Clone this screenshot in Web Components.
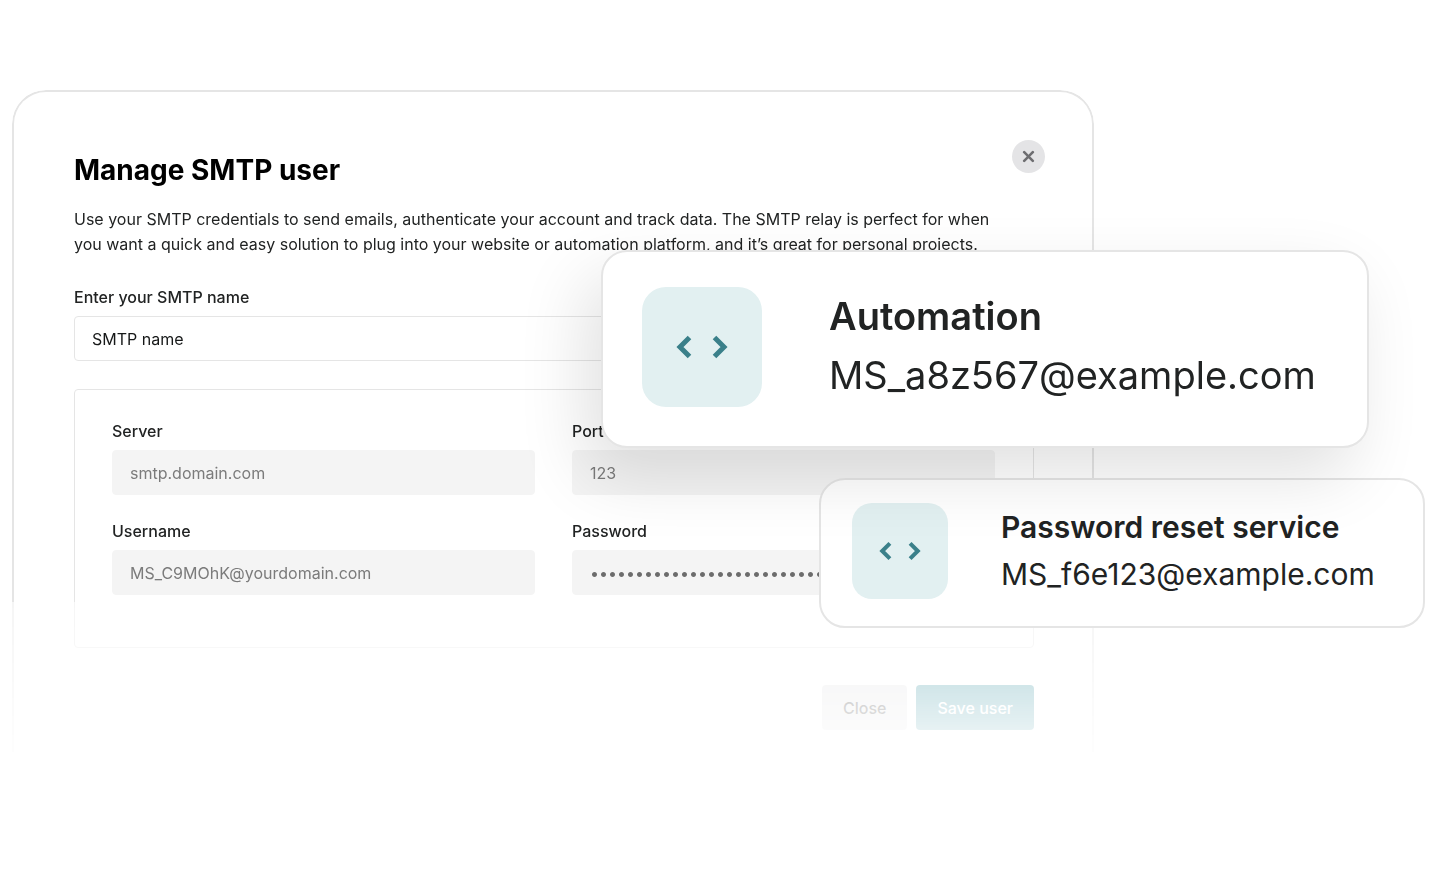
<!DOCTYPE html>
<html lang="en">
<head>
<meta charset="utf-8">
<meta name="viewport" content="width=device-width, initial-scale=1">
<title>Manage SMTP user</title>
<style>
  body {
    margin: 0;
    background: #fff;
    color: #212323;
    font-family: Inter, "Liberation Sans", sans-serif;
    font-size: 16px;
    --line: #e5e5e5;
    --field: #f4f4f4;
    --teal: #198291;
  }
</style>
</head>
<body>
<smtp-stage>
  <smtp-dialog heading="Manage SMTP user">
    <span slot="intro">Use your SMTP credentials to send emails, authenticate your account and track data. The SMTP relay is perfect for when you want a quick and easy solution to plug into your website or automation platform, and it’s great for personal projects.</span>
    <smtp-field label="Enter your SMTP name" value="SMTP name"></smtp-field>
    <smtp-panel>
      <smtp-field label="Server" value="smtp.domain.com" locked></smtp-field>
      <smtp-field label="Port" value="123" locked></smtp-field>
      <smtp-field label="Username" value="MS_C9MOhK@yourdomain.com" locked></smtp-field>
      <smtp-field label="Password" value="3f9c1b7a5d2e8046ab7719cdef250381c6a4" type="password" locked></smtp-field>
    </smtp-panel>
    <smtp-button slot="actions">Close</smtp-button>
    <smtp-button slot="actions" primary>Save user</smtp-button>
  </smtp-dialog>
  <smtp-user slot="back" small>
    <span slot="name">Password reset service</span>
    <span slot="email">MS_f6e123@example.com</span>
  </smtp-user>
  <smtp-user slot="front">
    <span slot="name">Automation</span>
    <span slot="email">MS_a8z567@example.com</span>
  </smtp-user>
</smtp-stage>

<script>
class SmtpStage extends HTMLElement {
  connectedCallback() {
    const shadowRoot = this.attachShadow({ mode: "open" });

    const styles = `
      :host {
        display: block;
        position: relative;
        padding: 90px 346px 0 12px;
      }

      /* user cards float over the dialog */
      .back, .front {
        position: absolute;
      }

      .back {
        top: 478px;
        right: 15px;
      }

      .front {
        top: 250px;
        right: 71px;
      }
    `;

    shadowRoot.innerHTML = `
      <style>${styles}</style>
      <slot></slot>
      <div class="back"><slot name="back"></slot></div>
      <div class="front"><slot name="front"></slot></div>
    `;
  }
}

class SmtpDialog extends HTMLElement {
  connectedCallback() {
    const shadowRoot = this.attachShadow({ mode: "open" });

    const styles = `
      :host {
        display: block;
      }

      section {
        border: 2px solid var(--line);
        border-bottom: 0;
        border-radius: 34px 34px 0 0;
        padding: 48px 58px 22px 60px;
        -webkit-mask-image: linear-gradient(#000 512px, rgba(0, 0, 0, 0.38) 512px, rgba(0, 0, 0, 0.06) 662px);
        mask-image: linear-gradient(#000 512px, rgba(0, 0, 0, 0.38) 512px, rgba(0, 0, 0, 0.06) 662px);
      }

      header {
        display: flex;
        justify-content: space-between;
        align-items: flex-start;
        margin-right: -11px;
      }

      h1 {
        margin: 12px 0 0;
        color: #000;
        font-size: 28px;
        line-height: 36px;
        font-weight: 700;
      }

      header button {
        display: flex;
        align-items: center;
        justify-content: center;
        width: 33px;
        height: 33px;
        padding: 0;
        border: 0;
        border-radius: 50%;
        background: #e4e4e6;
        color: #6d6d70;
      }

      p {
        margin: 19px 0 29px;
        padding-right: 20px;
        line-height: 25px;
      }

      .fields {
        display: flex;
        flex-direction: column;
        gap: 28px;
      }

      footer {
        display: flex;
        justify-content: flex-end;
        gap: 9px;
        margin-top: 37px;
      }
    `;

    shadowRoot.innerHTML = `
      <style>${styles}</style>
      <section role="dialog" aria-labelledby="title">
        <header>
          <h1 id="title">${this.getAttribute("heading")}</h1>
          <button type="button" aria-label="Close dialog">
            <svg width="13" height="13" viewBox="0 0 13 13" fill="none" stroke="currentColor" stroke-width="2.600" stroke-linecap="round"><path d="M2.200 2.200l8.600 8.600M10.800 2.200l-8.600 8.600"/></svg>
          </button>
        </header>
        <p><slot name="intro"></slot></p>
        <div class="fields"><slot></slot></div>
        <footer><slot name="actions"></slot></footer>
      </section>
    `;
  }
}

class SmtpPanel extends HTMLElement {
  connectedCallback() {
    const shadowRoot = this.attachShadow({ mode: "open" });

    const styles = `
      :host {
        display: grid;
        grid-template-columns: 1fr 1fr;
        gap: 25px 37px;
        padding: 30px 38px 52px 37px;
        border: 1px solid var(--line);
        border-radius: 4px;
      }
    `;

    shadowRoot.innerHTML = `
      <style>${styles}</style>
      <slot></slot>
    `;
  }
}

class SmtpField extends HTMLElement {
  connectedCallback() {
    const shadowRoot = this.attachShadow({ mode: "open" });
    const type = this.getAttribute("type") || "text";
    const locked = this.hasAttribute("locked");

    const styles = `
      :host {
        display: block;
      }

      label {
        display: block;
        margin-bottom: 8px;
        line-height: 22px;
        font-weight: 500;
      }

      input {
        display: block;
        box-sizing: border-box;
        width: 100%;
        height: 45px;
        padding: 0 17px;
        border: 1px solid var(--line);
        border-radius: 4px;
        background: #fff;
        color: #161818;
        font: inherit;
      }

      :host([locked]) input {
        border-color: var(--field);
        background: var(--field);
        color: #7b7b7b;
      }

      :host([type="password"]) input {
        color: #6c6c6c;
      }
    `;

    shadowRoot.innerHTML = `
      <style>${styles}</style>
      <label for="input">${this.getAttribute("label")}</label>
      <input id="input" type="${type}" value="${this.getAttribute("value")}" ${locked ? "readonly" : ""}>
    `;
  }
}

class SmtpButton extends HTMLElement {
  connectedCallback() {
    const shadowRoot = this.attachShadow({ mode: "open" });

    const styles = `
      :host {
        display: block;
      }

      button {
        height: 45px;
        padding: 0 21px;
        border: 0;
        border-radius: 4px;
        background: #dcdcde;
        color: #000;
        font: inherit;
        font-weight: 500;
      }

      :host([primary]) button {
        background: var(--teal);
        color: #fff;
      }
    `;

    shadowRoot.innerHTML = `
      <style>${styles}</style>
      <button type="button"><slot></slot></button>
    `;
  }
}

class SmtpUser extends HTMLElement {
  connectedCallback() {
    const shadowRoot = this.attachShadow({ mode: "open" });

    const styles = `
      :host {
        display: flex;
        align-items: center;
        box-sizing: border-box;
        width: 768px;
        height: 198px;
        gap: 67px;
        padding: 0 39px 4px;
        border: 2px solid var(--line);
        border-radius: 26px;
        background: #fff;
        box-shadow: -16px 28px 68px rgba(0, 0, 0, 0.12);
        font-size: 38px;
        line-height: 59px;
        white-space: nowrap;
      }

      .icon {
        display: flex;
        align-items: center;
        justify-content: center;
        width: 120px;
        height: 120px;
        border-radius: 24px;
        background: #e2f0f1;
        color: #3a808a;
      }

      .text {
        padding-bottom: 3px;
      }

      svg {
        width: 52px;
        height: 24px;
      }

      .name {
        font-weight: 600;
      }

      :host([small]) {
        width: 606px;
        height: 150px;
        gap: 53px;
        padding: 0 31px 4px;
        box-shadow: none;
        font-size: 30px;
        line-height: 47px;
      }

      :host([small]) .icon {
        width: 96px;
        height: 96px;
        border-radius: 20px;
      }

      :host([small]) .text {
        padding-bottom: 0;
      }

      :host([small]) svg {
        width: 42px;
        height: 20px;
      }
    `;

    shadowRoot.innerHTML = `
      <style>${styles}</style>
      <div class="icon">
        <svg viewBox="0 0 52 24" fill="none" stroke="currentColor" stroke-width="5"><path d="M13.500 2.500L4 12l9.500 9.500M38.500 2.500L48 12l-9.500 9.500"/></svg>
      </div>
      <div class="text">
        <div class="name"><slot name="name"></slot></div>
        <div><slot name="email"></slot></div>
      </div>
    `;
  }
}

customElements.define("smtp-stage", SmtpStage);
customElements.define("smtp-dialog", SmtpDialog);
customElements.define("smtp-panel", SmtpPanel);
customElements.define("smtp-field", SmtpField);
customElements.define("smtp-button", SmtpButton);
customElements.define("smtp-user", SmtpUser);
</script>
</body>
</html>
